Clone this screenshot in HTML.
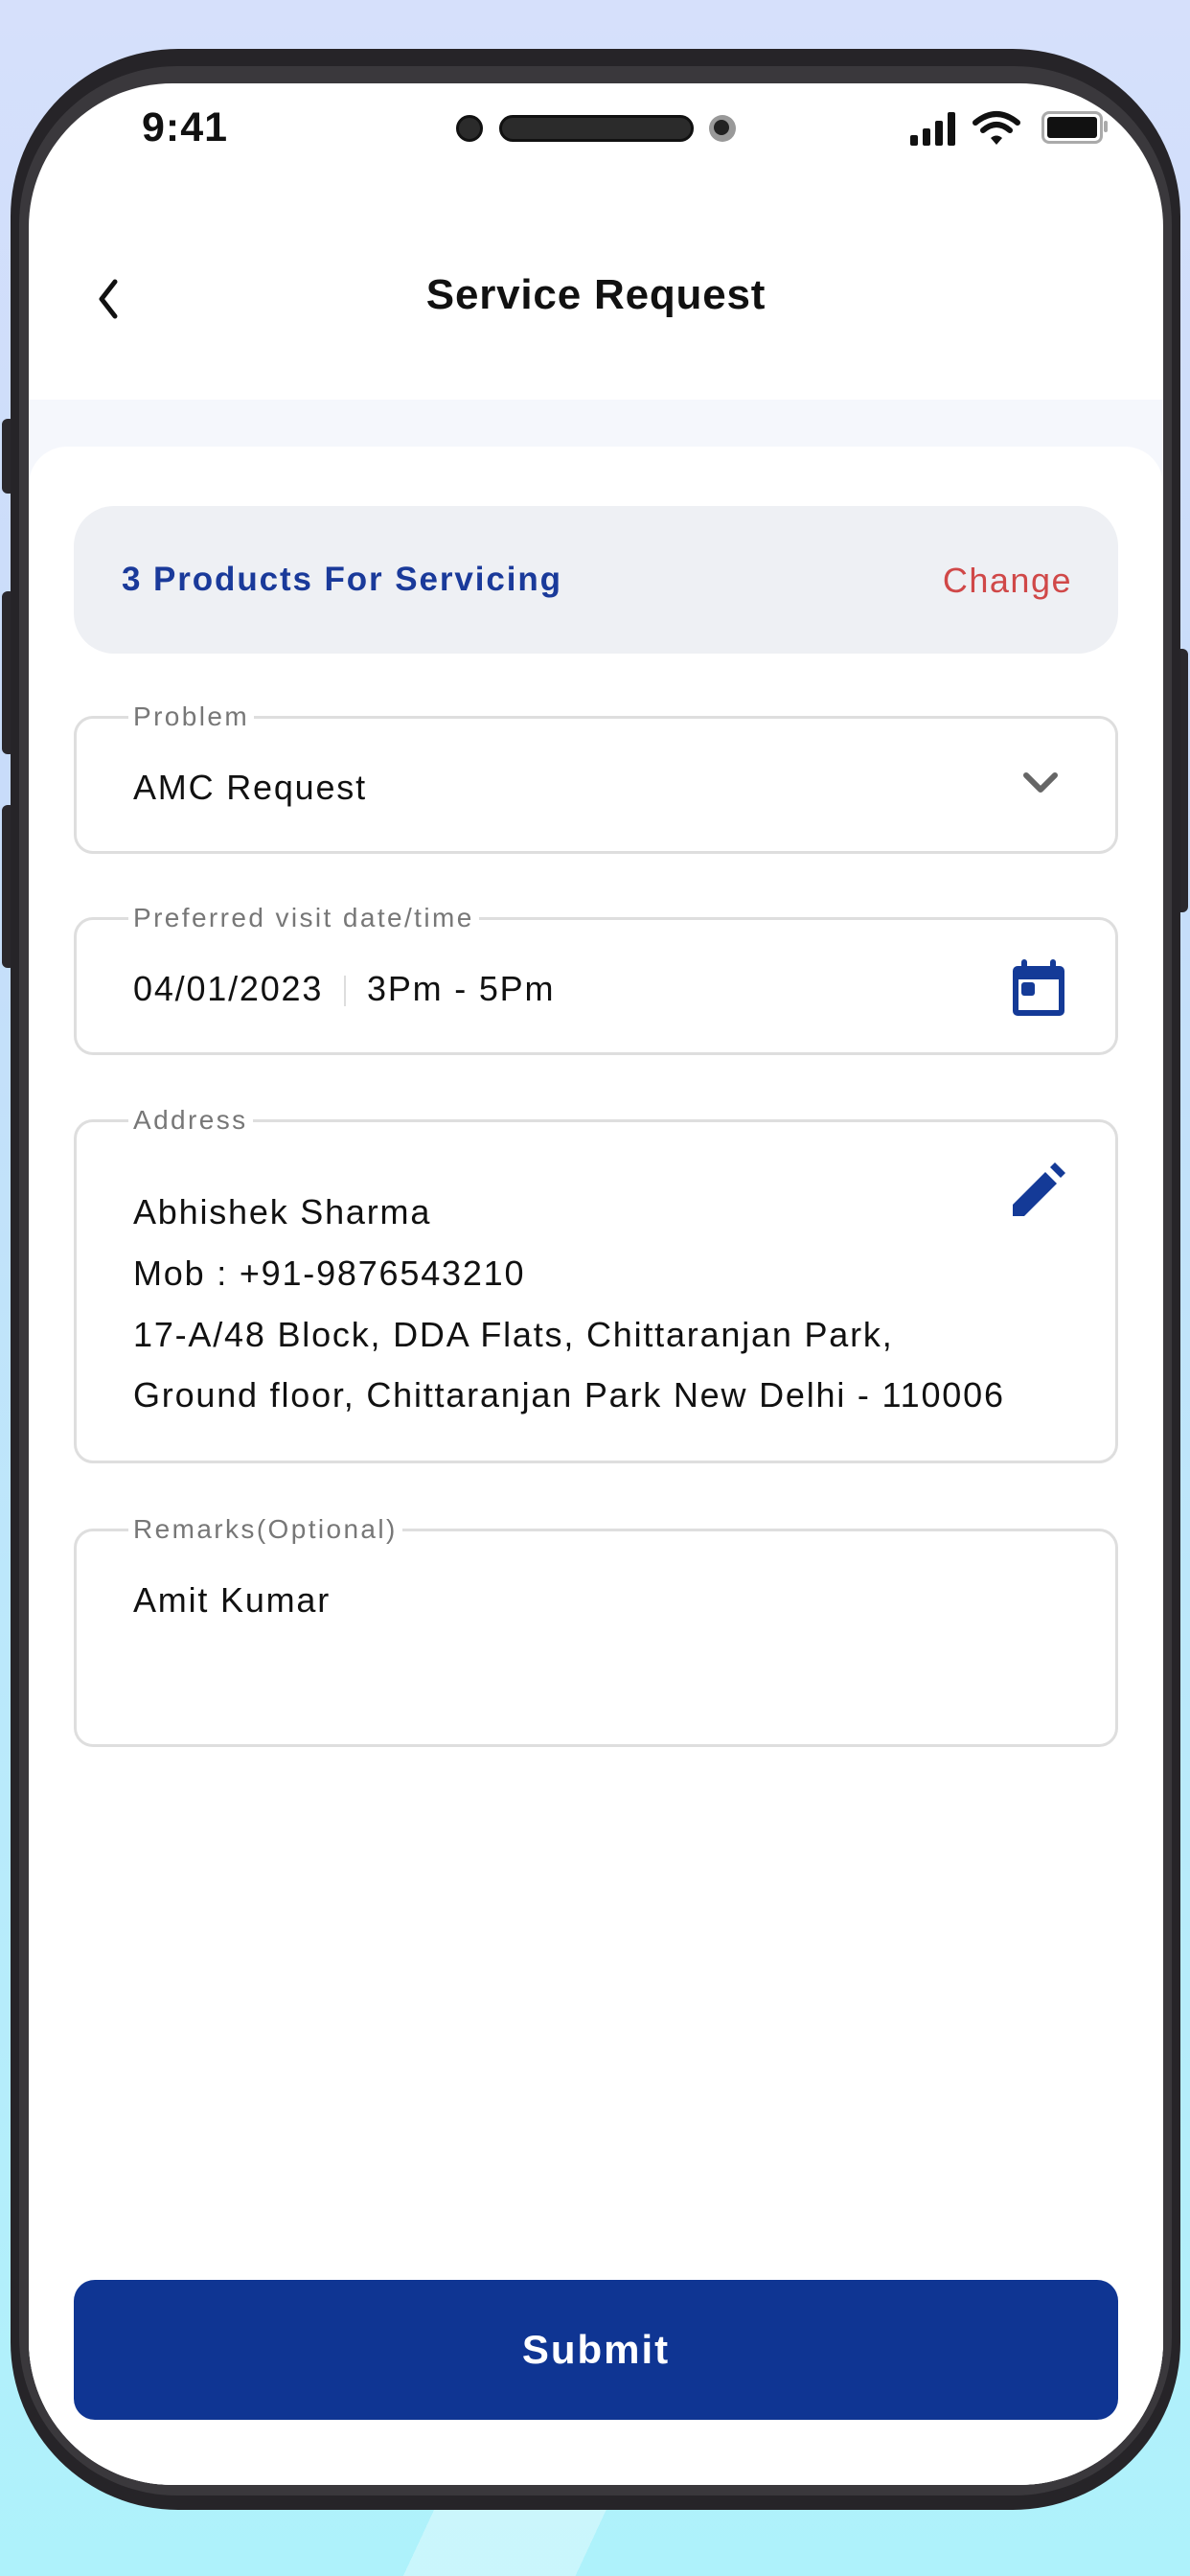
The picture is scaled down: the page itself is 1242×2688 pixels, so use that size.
<!DOCTYPE html>
<html><head><meta charset="utf-8"><style>
*{margin:0;padding:0;box-sizing:border-box}
html,body{width:1242px;height:2688px;overflow:hidden}
body{position:relative;font-family:"Liberation Sans",sans-serif;background:linear-gradient(180deg,#d6e0fb 0%,#c8dcfa 30%,#b9eafb 70%,#aef2fb 100%)}
.band{position:absolute;left:0;top:2600px;width:1242px;height:88px;background:linear-gradient(115deg,rgba(255,255,255,0) 0 36%,rgba(255,255,255,.35) 36% 50%,rgba(255,255,255,0) 50%)}
.btn{position:absolute;background:#2a282d;border-radius:6px}
.frame{position:absolute;left:11px;top:51px;width:1221px;height:2568px;background:#262428;border-radius:175px}
.ring{position:absolute;left:20px;top:69px;width:1203px;height:2535px;border-radius:165px;background:#3a383c}
.screen{position:absolute;left:30px;top:87px;width:1184px;height:2506px;border-radius:150px;background:#fff;overflow:hidden}
.abs{position:absolute}
.field{position:absolute;left:47px;width:1090px;border:3px solid #dedede;border-radius:20px;background:#fff}
.lbl{position:absolute;left:54px;top:-20px;background:#fff;padding:0 5px;font-size:28px;color:#777;line-height:36px;letter-spacing:2.4px}
.val{position:absolute;left:59px;font-size:36px;color:#111;line-height:44px;letter-spacing:1.8px}
</style></head><body>
<div class="band"></div>
<div class="btn" style="left:2px;top:437px;width:14px;height:78px"></div>
<div class="btn" style="left:2px;top:617px;width:14px;height:170px"></div>
<div class="btn" style="left:2px;top:840px;width:14px;height:170px"></div>
<div class="btn" style="left:1226px;top:677px;width:14px;height:275px"></div>
<div class="frame"></div>
<div class="ring"></div>
<div class="screen">
  <div class="abs" style="left:118px;top:22px;font-size:43px;font-weight:bold;color:#111;letter-spacing:1px">9:41</div>
  <div class="abs" style="left:446px;top:33px;width:28px;height:28px;border-radius:50%;background:#2b2b2b;border:3px solid #111"></div>
  <div class="abs" style="left:491px;top:33px;width:203px;height:28px;border-radius:14px;background:#2b2b2b;border:3px solid #111"></div>
  <div class="abs" style="left:710px;top:33px;width:28px;height:28px;border-radius:50%;background:#999;"><div style="position:absolute;left:5px;top:5px;width:16px;height:16px;border-radius:50%;background:#222"></div></div>
  <svg class="abs" style="left:918px;top:27px" width="120" height="40" viewBox="0 0 120 40">
    <rect x="2" y="27" width="8" height="11" rx="2" fill="#111"/>
    <rect x="15" y="20" width="8" height="18" rx="2" fill="#111"/>
    <rect x="28" y="12" width="8" height="26" rx="2" fill="#111"/>
    <rect x="41" y="3" width="8" height="35" rx="2" fill="#111"/>
    <path d="M70 14 Q92 -4 114 14" stroke="#111" stroke-width="6" fill="none" stroke-linecap="round"/>
    <path d="M78 22 Q92 10 106 22" stroke="#111" stroke-width="6" fill="none" stroke-linecap="round"/>
    <path d="M86 30 L92 37 L98 30 Q92 25 86 30Z" fill="#111"/>
  </svg>
  <div class="abs" style="left:1057px;top:29px;width:64px;height:34px;border:3px solid #aaa;border-radius:8px;background:#fff"><div style="position:absolute;left:3px;top:3px;width:52px;height:22px;background:#111;border-radius:3px"></div></div>
  <div class="abs" style="left:1122px;top:39px;width:4px;height:12px;background:#aaa;border-radius:2px"></div>
  <svg class="abs" style="left:68px;top:203px" width="30" height="44" viewBox="0 0 30 44"><path d="M22 4 L8 22 L22 40" stroke="#111" stroke-width="5" fill="none" stroke-linecap="round" stroke-linejoin="round"/></svg>
  <div class="abs" style="left:0;width:1184px;top:196px;text-align:center;font-size:44px;font-weight:bold;color:#111;letter-spacing:0.8px">Service Request</div>
  <div class="abs" style="left:0;top:330px;width:1184px;height:2200px;background:#f5f7fc"></div>
  <div class="abs" style="left:0;top:379px;width:1184px;height:2200px;background:#fff;border-radius:40px 40px 0 0"></div>
  <div class="abs" style="left:47px;top:441px;width:1090px;height:154px;background:#eef0f4;border-radius:42px"></div>
  <div class="abs" style="left:97px;top:498px;font-size:35px;font-weight:bold;color:#1a3a9a;letter-spacing:1.9px">3 Products For Servicing</div>
  <div class="abs" style="right:95px;top:498px;font-size:36px;color:#d04848;letter-spacing:1.5px">Change</div>
  <div class="field" style="top:660px;height:144px">
    <div class="lbl">Problem</div>
    <div class="val" style="top:50px">AMC Request</div>
    <svg class="abs" style="left:987px;top:55px" width="38" height="26" viewBox="0 0 38 26"><path d="M4 4 L19 19 L34 4" stroke="#666" stroke-width="6" fill="none" stroke-linecap="round" stroke-linejoin="round"/></svg>
  </div>
  <div class="field" style="top:870px;height:144px">
    <div class="lbl">Preferred visit date/time</div>
    <div class="val" style="top:50px">04/01/2023</div>
    <div class="abs" style="left:279px;top:58px;width:2px;height:32px;background:#ddd"></div>
    <div class="val" style="left:303px;top:50px">3Pm - 5Pm</div>
    <svg class="abs" style="left:975px;top:40px" width="58" height="62" viewBox="0 0 58 62"><rect x="2" y="8" width="54" height="52" rx="5" fill="#143a97"/><rect x="8" y="22" width="42" height="32" fill="#fff"/><rect x="11" y="25" width="14" height="14" rx="3" fill="#143a97"/><rect x="11" y="1" width="6" height="12" rx="3" fill="#143a97"/><rect x="41" y="1" width="6" height="12" rx="3" fill="#143a97"/></svg>
  </div>
  <div class="field" style="top:1081px;height:359px">
    <div class="lbl">Address</div>
    <div class="val" style="top:72px">Abhishek Sharma</div>
    <div class="val" style="top:136px">Mob : +91-9876543210</div>
    <div class="val" style="top:200px">17-A/48 Block, DDA Flats, Chittaranjan Park,</div>
    <div class="val" style="top:263px">Ground floor, Chittaranjan Park New Delhi - 110006</div>
    <svg class="abs" style="left:975px;top:42px" width="58" height="58" viewBox="0 0 58 58"><path d="M2 44 L36 10 L48 22 L14 56 L2 56Z" fill="#143a97"/><path d="M41 5 L46 0 L57 11 L52 16Z" fill="#143a97"/></svg>
  </div>
  <div class="field" style="top:1508px;height:228px">
    <div class="lbl">Remarks(Optional)</div>
    <div class="val" style="top:50px">Amit Kumar</div>
  </div>
  <div class="abs" style="left:47px;top:2292px;width:1090px;height:146px;background:#0f3593;border-radius:22px;color:#fff;font-size:42px;font-weight:bold;text-align:center;line-height:146px;letter-spacing:2px">Submit</div>
</div>
</body></html>
